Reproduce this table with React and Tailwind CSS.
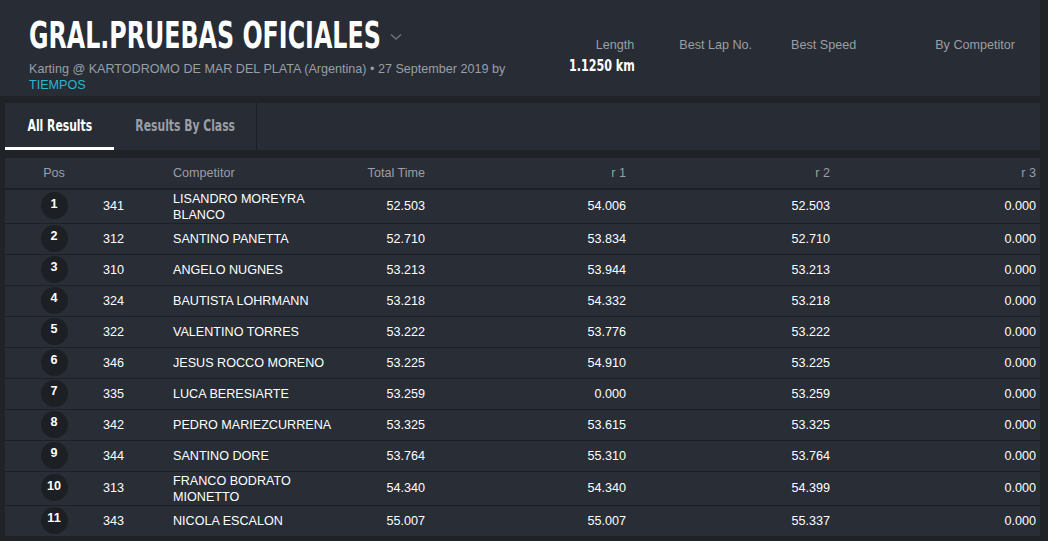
const ROWS = [
  [1, 341, "LISANDRO MOREYRA BLANCO", "52.503", "54.006", "52.503", "0.000"],
  [2, 312, "SANTINO PANETTA", "52.710", "53.834", "52.710", "0.000"],
  [3, 310, "ANGELO NUGNES", "53.213", "53.944", "53.213", "0.000"],
  [4, 324, "BAUTISTA LOHRMANN", "53.218", "54.332", "53.218", "0.000"],
  [5, 322, "VALENTINO TORRES", "53.222", "53.776", "53.222", "0.000"],
  [6, 346, "JESUS ROCCO MORENO", "53.225", "54.910", "53.225", "0.000"],
  [7, 335, "LUCA BERESIARTE", "53.259", "0.000", "53.259", "0.000"],
  [8, 342, "PEDRO MARIEZCURRENA", "53.325", "53.615", "53.325", "0.000"],
  [9, 344, "SANTINO DORE", "53.764", "55.310", "53.764", "0.000"],
  [10, 313, "FRANCO BODRATO MIONETTO", "54.340", "54.340", "54.399", "0.000"],
  [11, 343, "NICOLA ESCALON", "55.007", "55.007", "55.337", "0.000"],
];

// no condensed face installed, so squeeze DejaVu bold horizontally
const narrow = { fontFamily: '"DejaVu Sans", sans-serif' };

export default function App() {
  return (
    <div
      className="w-full h-[541px] bg-[#1f2328] overflow-hidden pl-[5px] pr-[8px]"
      style={{ fontFamily: '"Liberation Sans", Arial, sans-serif' }}
    >
      {/* Header */}
      <div className="h-[96px] bg-[#272c35] flex -ml-[5px] pl-[29px]">
        <div className="flex-1 min-w-0 pt-[13px]">
          <div className="flex items-center whitespace-nowrap">
            <h1 className="flex-none w-[352px] overflow-visible text-[38px] font-bold text-white leading-[44px]" style={narrow}>
              <span className="inline-block origin-left scale-x-[0.625]">GRAL.PRUEBAS OFICIALES</span>
            </h1>
            <svg className="ml-[9px] mt-[4px] flex-none" width="12" height="8" viewBox="0 0 12 8">
              <path d="M1 1.5 L6 6 L11 1.5" fill="none" stroke="#6d727a" strokeWidth="1.6" />
            </svg>
          </div>
          <p className="text-[12.6px] text-[#9a9fa6] leading-4 mt-[4px] whitespace-nowrap">
            Karting @ KARTODROMO DE MAR DEL PLATA (Argentina) • 27 September 2019 by
          </p>
          <p className="text-[12.6px] text-[#2bb5cf] leading-4">TIEMPOS</p>
        </div>
        <div className="flex flex-none pt-[37px] pr-[25px] whitespace-nowrap text-[12.6px]">
          <div className="w-[70px] flex flex-col items-end">
            <span className="text-[#9a9fa6] leading-4">Length</span>
            <span className="text-[15px] font-bold text-white leading-5 mt-[3px]" style={narrow}>
              <span className="inline-block origin-right scale-x-[0.74]">1.1250 km</span>
            </span>
          </div>
          <div className="ml-[45px] text-[#9a9fa6] leading-4">Best Lap No.</div>
          <div className="ml-[39px] text-[#9a9fa6] leading-4">Best Speed</div>
          <div className="ml-[79px] text-[#9a9fa6] leading-4">By Competitor</div>
        </div>
      </div>

      {/* Tabs */}
      <div className="mt-[7px] h-[47px] bg-[#272c35] flex whitespace-nowrap">
        <div className="relative w-[109px] flex items-center justify-center">
          <span className="inline-block scale-x-[0.72] text-[15px] font-bold text-white" style={narrow}>All Results</span>
          <div className="absolute left-0 bottom-0 w-[109px] h-[3px] bg-white" />
        </div>
        <div className="w-[143px] flex items-center justify-center border-r border-[#1c1f24]">
          <span className="inline-block scale-x-[0.72] text-[15px] font-bold text-[#9a9fa6]" style={narrow}>Results By Class</span>
        </div>
      </div>

      {/* Table */}
      <div className="mt-[8px] bg-[#282d36]">
        <div className="flex h-[32px] items-center text-[12.6px] text-[#9a9fa6] border-b-2 border-[#1d2025]">
          <div className="w-[98px] text-center">Pos</div>
          <div className="w-[70px]" />
          <div className="w-[165px]">Competitor</div>
          <div className="w-[87px] text-right">Total Time</div>
          <div className="w-[201px] text-right">r 1</div>
          <div className="w-[204px] text-right">r 2</div>
          <div className="w-[206px] text-right">r 3</div>
        </div>
        {ROWS.map(([pos, num, name, total, r1, r2, r3]) => {
          const tall = name.length > 20;
          return (
            <div
              key={pos}
              className={
                "flex items-center text-[12.6px] text-white border-b border-[#1d2025] " +
                (tall ? "h-[34px]" : "h-[31px]")
              }
            >
              <div className="w-[98px] flex justify-center">
                <div className="w-[27px] h-[27px] rounded-full bg-[#1c1f24] flex items-center justify-center font-bold -mt-[2px]">
                  <span className="-mt-[3px]">{pos}</span>
                </div>
              </div>
              <div className="w-[70px]">{num}</div>
              <div className="w-[165px] leading-4">{name}</div>
              <div className="w-[87px] text-right">{total}</div>
              <div className="w-[201px] text-right">{r1}</div>
              <div className="w-[204px] text-right">{r2}</div>
              <div className="w-[206px] text-right">{r3}</div>
            </div>
          );
        })}
      </div>
    </div>
  );
}
